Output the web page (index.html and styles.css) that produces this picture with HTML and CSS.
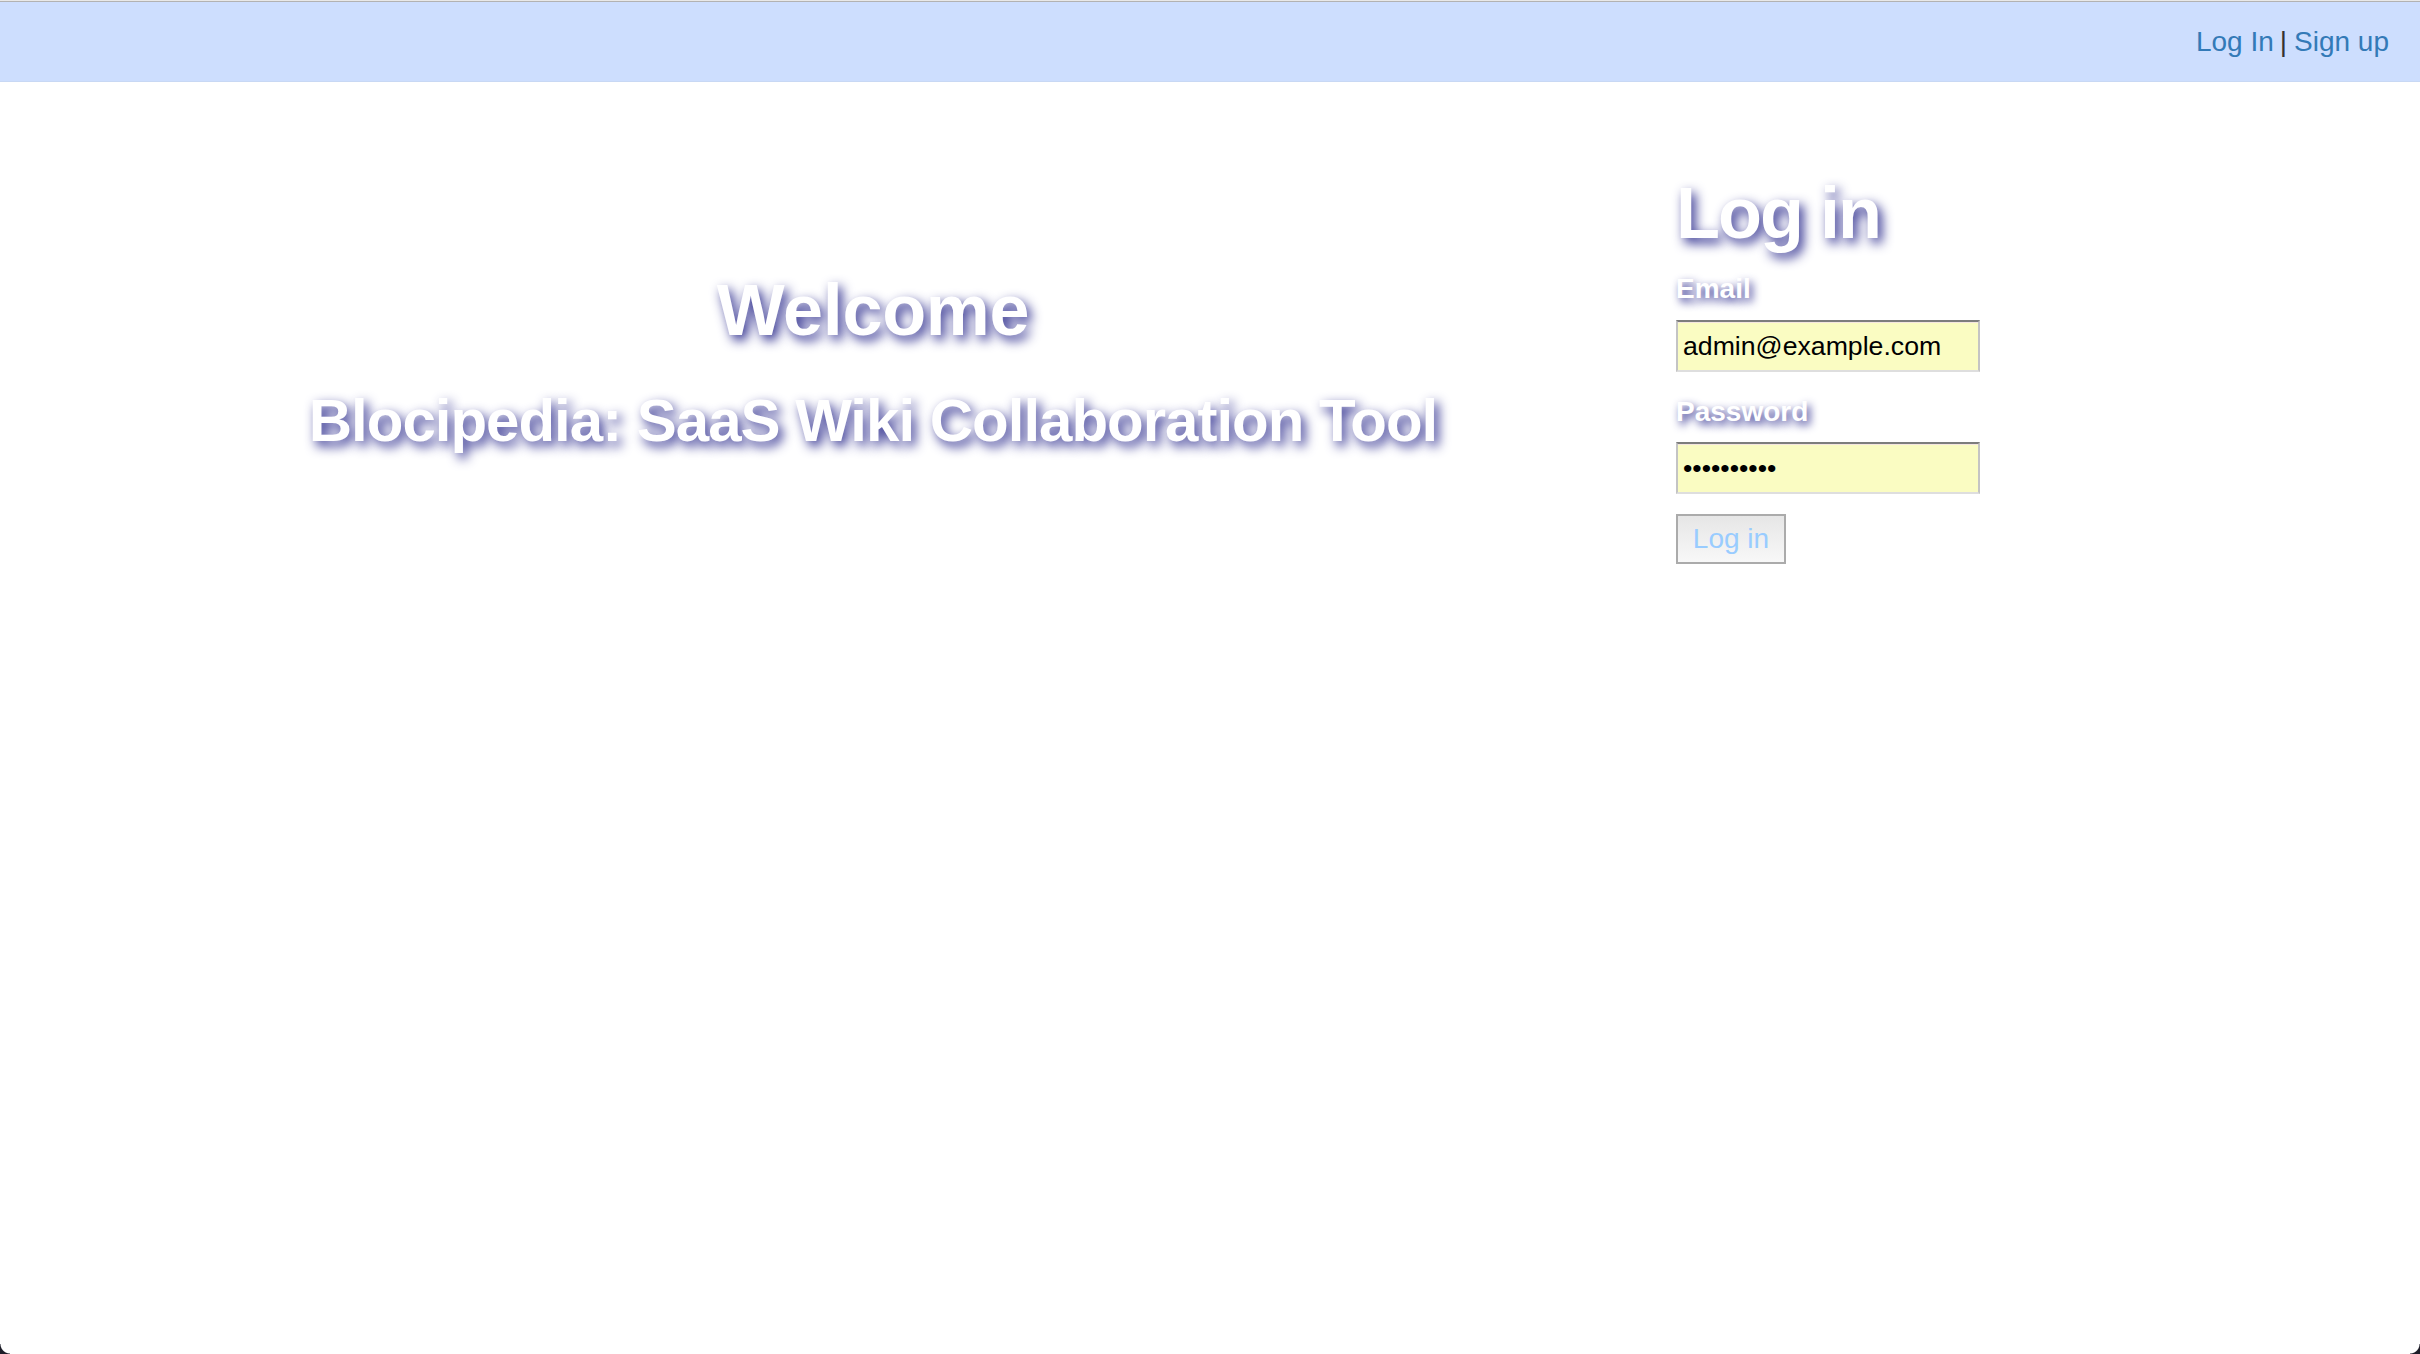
FILE: index.html
```html
<!DOCTYPE html>
<html lang="en">
<head>
<meta charset="utf-8">
<title>Blocipedia</title>
<link rel="stylesheet" href="styles.css">
</head>
<body>
<div class="topline"></div>
<header class="navbar">
  <nav class="nav-links">
    <a href="#" class="nav-link">Log In</a><span class="sep">|</span><a href="#" class="nav-link">Sign up</a>
  </nav>
</header>
<main class="main">
  <section class="welcome">
    <h1 class="title">Welcome</h1>
    <h2 class="subtitle">Blocipedia: SaaS Wiki Collaboration Tool</h2>
  </section>
  <section class="login">
    <h1 class="login-title">Log in</h1>
    <form class="login-form">
      <label class="field-label email-label" for="email">Email</label>
      <input class="field-input" id="email" type="email" value="admin@example.com">
      <label class="field-label password-label" for="password">Password</label>
      <input class="field-input" id="password" type="password" value="adminadmin">
      <button type="button" class="submit-btn">Log in</button>
    </form>
  </section>
</main>
<div class="corner corner-left"></div>
<div class="corner corner-right"></div>
</body>
</html>
```
FILE: styles.css
```css
html, body {
  margin: 0;
  padding: 0;
  background: #ffffff;
  font-family: "Liberation Sans", Arial, Helvetica, sans-serif;
  color: #333333;
}

.topline {
  height: 1px;
  border-bottom: 1px solid #b2b2b2;
  background: #e8e8e8;
}

.navbar {
  height: 80px;
  background: #cddefe;
  display: flex;
  justify-content: flex-end;
  align-items: center;
  padding-right: 31px;
  border-bottom: 1px solid #c8d8f4;
  box-sizing: border-box;
}

.nav-links {
  font-size: 28px;
  line-height: 80px;
}

.nav-link {
  color: #337ab7;
  text-decoration: none;
}

.sep {
  color: #333333;
  margin: 0 7px 0 6px;
}

.main {
  display: grid;
  grid-template-columns: 1574px 1fr;
  column-gap: 16px;
  padding-left: 86px;
}

.welcome {
  text-align: center;
}

.title,
.subtitle,
.login-title,
.field-label {
  color: #ffffff;
  font-weight: bold;
  text-shadow: 4px 5px 12px #2a2a8c;
}

.title {
  font-size: 72px;
  line-height: 80px;
  margin: 188px 0 0;
  letter-spacing: -0.3px;
}

.subtitle {
  font-size: 60px;
  line-height: 66px;
  margin: 38px 0 0;
  letter-spacing: -1px;
}

.login-title {
  font-size: 72px;
  line-height: 80px;
  margin: 91px 0 0;
  letter-spacing: -2px;
}

.login-form {
  display: flex;
  flex-direction: column;
  align-items: flex-start;
}

.field-label {
  display: block;
  font-size: 28px;
  line-height: 40px;
  text-shadow: 3px 4px 9px #2a2a8c;
}

.email-label {
  margin-top: 16px;
}

.password-label {
  margin-top: 20px;
}

.field-input {
  box-sizing: border-box;
  width: 304px;
  height: 52px;
  margin-top: 10px;
  padding: 0 5px;
  font-family: "Liberation Sans", Arial, Helvetica, sans-serif;
  font-size: 26.67px;
  color: #000000;
  background: #fafcc2;
  border-style: solid;
  border-width: 2px;
  border-color: #7d7d7d #c4c4c4 #dedede #c4c4c4;
  border-radius: 0;
  box-shadow: inset 0 1px 0 #f4e6e0;
  outline: none;
}

.field-input:first-of-type {
  margin-top: 11px;
}

.submit-btn {
  box-sizing: border-box;
  width: 110px;
  height: 50px;
  margin-top: 20px;
  padding: 0;
  font-family: "Liberation Sans", Arial, Helvetica, sans-serif;
  font-size: 28px;
  color: #99ccff;
  background: linear-gradient(#e6e6e6, #f8f8f8);
  border: 2px solid #ababab;
  border-radius: 0;
}

.corner {
  position: fixed;
  bottom: 0;
  width: 10px;
  height: 10px;
}

.corner-left {
  left: 0;
  background: radial-gradient(circle at 100% 0, transparent 9px, #1d1d28 10px);
}

.corner-right {
  right: 0;
  background: radial-gradient(circle at 0 0, transparent 9px, #1d1d28 10px);
}
```
